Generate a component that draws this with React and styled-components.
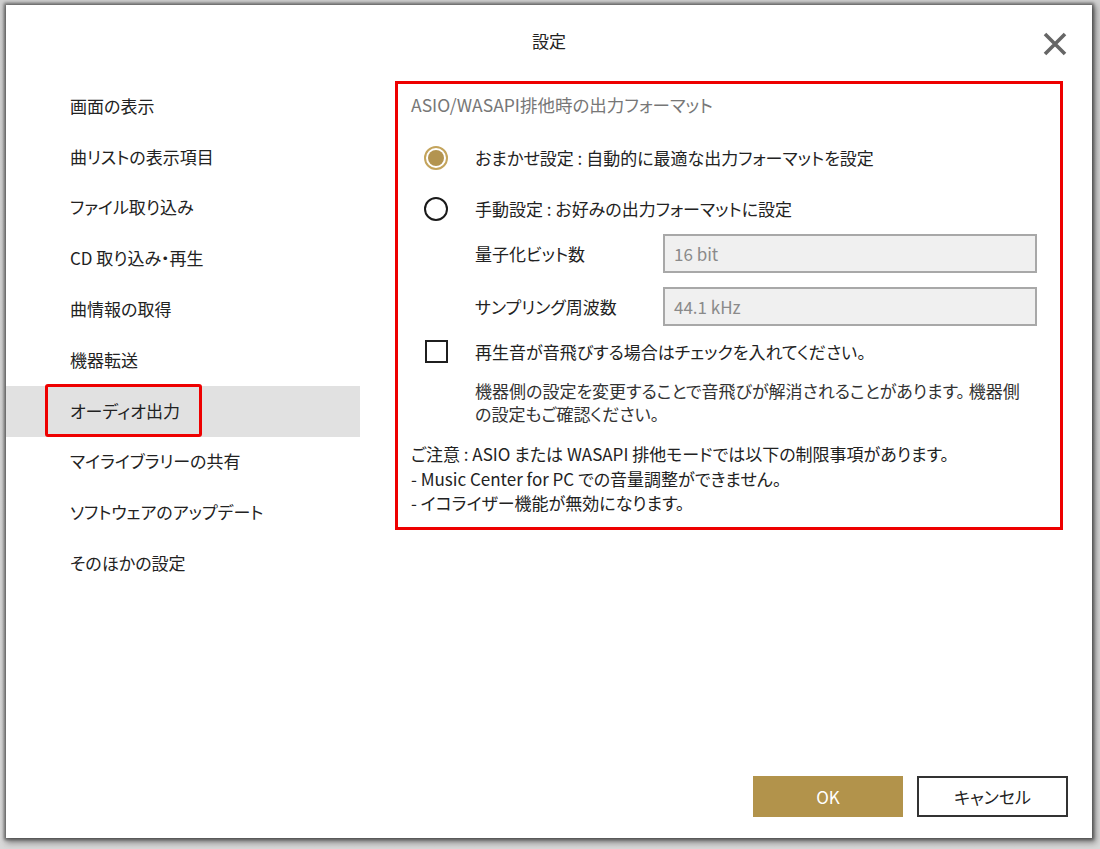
import React from 'react';
import styled, { createGlobalStyle } from 'styled-components';

const GlobalStyle = createGlobalStyle`
  html, body {
    margin: 0;
    padding: 0;
    background: #d4d4d4;
  }
  body {
    font-family: "Noto Sans CJK JP", "Noto Sans", sans-serif;
    font-feature-settings: "palt";
    color: #222;
  }
`;

const Page = styled.div`
  width: 1100px;
  height: 849px;
  padding: 5px 8px 11px 6px;
  box-sizing: border-box;
  background: linear-gradient(#cfcfcf, #d8d8d8);
`;

const Dialog = styled.div`
  width: 1086px;
  height: 833px;
  background: #fff;
  box-shadow: 0 0 3px 2px rgba(0, 0, 0, 0.45), 2px 3px 6px 2px rgba(0, 0, 0, 0.35);
  display: flex;
  flex-direction: column;
`;

const Header = styled.header`
  position: relative;
  height: 76px;
  display: flex;
  align-items: center;
  justify-content: center;
  padding-bottom: 6px;
  box-sizing: border-box;
`;

const Title = styled.h1`
  margin: 0;
  font-size: 17px;
  font-weight: 400;
  color: #222;
`;

const CloseButton = styled.button`
  position: absolute;
  right: 24px;
  top: 26px;
  width: 26px;
  height: 26px;
  padding: 0;
  border: none;
  background: none;
  display: flex;
  align-items: center;
  justify-content: center;
`;

const Body = styled.div`
  display: flex;
  flex: 1;
`;

const Sidebar = styled.nav`
  width: 354px;
  display: flex;
  flex-direction: column;
  margin-right: 35px;
`;

const NavItem = styled.div`
  position: relative;
  height: 50.8px;
  display: flex;
  align-items: center;
  padding-left: 64px;
  padding-bottom: 2px;
  box-sizing: border-box;
  font-size: 17px;
  color: #222;
  background: ${p => (p.$active ? '#e1e1e1' : 'transparent')};
`;

const Highlight = styled.span`
  position: absolute;
  left: 39px;
  top: -2px;
  width: 157px;
  height: 53px;
  box-sizing: border-box;
  border: 3px solid #ee0000;
  border-radius: 3px;
`;

const Panel = styled.section`
  width: 668px;
  height: 449px;
  box-sizing: border-box;
  border: 3px solid #ee0000;
  padding: 0 23px 0 13px;
  display: flex;
  flex-direction: column;
`;

const SectionHeading = styled.div`
  margin-top: 9px;
  line-height: 24px;
  font-size: 17.5px;
  color: #777;
`;

const OptionRow = styled.div`
  height: 51px;
  display: flex;
  align-items: center;
  margin-top: ${p => p.$top || 0}px;
  font-size: 17px;
`;

const Radio = styled.span`
  width: 24px;
  height: 24px;
  margin-left: 13px;
  margin-right: 27px;
  box-sizing: border-box;
  border-radius: 50%;
  border: 2px solid ${p => (p.$checked ? '#c4a45c' : '#1a1a1a')};
  display: flex;
  align-items: center;
  justify-content: center;
  flex-shrink: 0;
  &::after {
    content: '';
    display: ${p => (p.$checked ? 'block' : 'none')};
    width: 16px;
    height: 16px;
    border-radius: 50%;
    background: #b39450;
  }
`;

const Checkbox = styled.span`
  width: 23px;
  height: 23px;
  margin-left: 14px;
  margin-right: 27px;
  box-sizing: border-box;
  border: 2px solid #1f1f1f;
  flex-shrink: 0;
`;

const FieldRow = styled.div`
  height: 39px;
  display: flex;
  align-items: center;
  padding-left: 64px;
  margin-top: ${p => p.$top || 0}px;
  font-size: 17px;
`;

const FieldLabel = styled.span`
  width: 188px;
  flex-shrink: 0;
`;

const FieldBox = styled.div`
  flex: 1;
  height: 39px;
  box-sizing: border-box;
  border: 2px solid #a8a8a8;
  background: #f0f0f0;
  display: flex;
  align-items: center;
  padding-left: 9px;
  color: #8a8a8a;
  font-size: 17px;
`;

const Note = styled.p`
  margin: 2px 0 0;
  padding-left: 64px;
  font-size: 17px;
  line-height: 23px;
  color: #333;
`;

const Caution = styled.p`
  margin: 17px 0 0;
  font-size: 17px;
  line-height: 24.5px;
  color: #222;
`;

const Footer = styled.footer`
  margin-top: auto;
  display: flex;
  justify-content: flex-end;
  gap: 14px;
  padding: 0 24px 21px 0;
`;

const Button = styled.button`
  width: ${p => (p.$primary ? 150 : 151)}px;
  height: 41px;
  box-sizing: border-box;
  font-family: inherit;
  font-feature-settings: "palt";
  font-size: 17px;
  border: ${p => (p.$primary ? 'none' : '2px solid #333')};
  background: ${p => (p.$primary ? '#b2934b' : '#fff')};
  color: ${p => (p.$primary ? '#fff' : '#222')};
  padding: 0;
`;

const navItems = [
  '画面の表示',
  '曲リストの表示項目',
  'ファイル取り込み',
  'CD 取り込み・再生',
  '曲情報の取得',
  '機器転送',
  'オーディオ出力',
  'マイライブラリーの共有',
  'ソフトウェアのアップデート',
  'そのほかの設定',
];

export default function App() {
  return (
    <>
      <GlobalStyle />
      <Page>
        <Dialog>
          <Header>
            <Title>設定</Title>
            <CloseButton aria-label="閉じる">
              <svg width="24" height="24" viewBox="0 0 24 24">
                <path d="M2 2 L22 22 M22 2 L2 22" stroke="#666" strokeWidth="3.6" fill="none" />
              </svg>
            </CloseButton>
          </Header>
          <Body>
            <Sidebar>
              {navItems.map(item => {
                const active = item === 'オーディオ出力';
                return (
                  <NavItem key={item} $active={active}>
                    {active && <Highlight />}
                    {item}
                  </NavItem>
                );
              })}
            </Sidebar>
            <Panel>
              <SectionHeading>ASIO/WASAPI排他時の出力フォーマット</SectionHeading>
              <OptionRow $top={15}>
                <Radio $checked />
                おまかせ設定 : 自動的に最適な出力フォーマットを設定
              </OptionRow>
              <OptionRow>
                <Radio />
                手動設定 : お好みの出力フォーマットに設定
              </OptionRow>
              <FieldRow>
                <FieldLabel>量子化ビット数</FieldLabel>
                <FieldBox>16 bit</FieldBox>
              </FieldRow>
              <FieldRow $top={14}>
                <FieldLabel>サンプリング周波数</FieldLabel>
                <FieldBox>44.1 kHz</FieldBox>
              </FieldRow>
              <OptionRow>
                <Checkbox />
                再生音が音飛びする場合はチェックを入れてください。
              </OptionRow>
              <Note>
                機器側の設定を変更することで音飛びが解消されることがあります。 機器側
                <br />
                の設定もご確認ください。
              </Note>
              <Caution>
                ご注意 : ASIO または WASAPI 排他モードでは以下の制限事項があります。
                <br />
                - Music Center for PC での音量調整ができません。
                <br />
                - イコライザー機能が無効になります。
              </Caution>
            </Panel>
          </Body>
          <Footer>
            <Button $primary>OK</Button>
            <Button>キャンセル</Button>
          </Footer>
        </Dialog>
      </Page>
    </>
  );
}
